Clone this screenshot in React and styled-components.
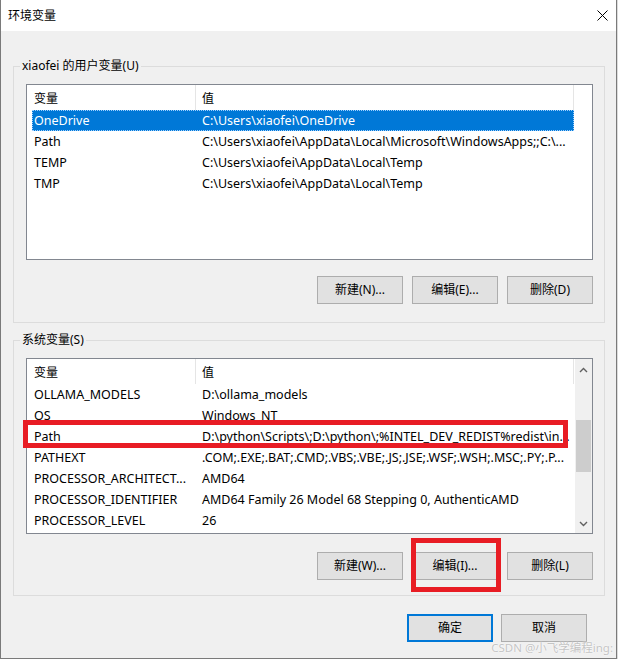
import React from 'react';
import styled, { createGlobalStyle } from 'styled-components';

const GlobalStyle = createGlobalStyle`
  html, body { margin: 0; padding: 0; background: #dcdcdc; }
  body {
    font-family: "Noto Sans", "Noto Sans CJK SC", sans-serif;
    font-size: 12px;
    color: #000;
  }
  * { box-sizing: border-box; }
`;

const Window = styled.div`
  position: relative;
  width: 617px;
  height: 659px;
  background: #f0f0f0;
  border: 1px solid #7a7a7a;
  border-top: none;
  display: flex;
  flex-direction: column;
`;

const TitleBar = styled.div`
  height: 31px;
  flex: none;
  background: #fff;
  display: flex;
  align-items: center;
  justify-content: space-between;
  padding: 0 8px 0 7px;
`;

const Title = styled.span`
  font-size: 12px;
  line-height: 16px;
`;

const Content = styled.div`
  flex: 1;
  display: flex;
  flex-direction: column;
  padding: 27px 11px 0 12px;
`;

const Group = styled.fieldset`
  margin: 0;
  padding: 10px 11px ${p => p.$padBottom}px 12px;
  border: 1px solid #dcdcdc;
  min-width: 0;
  & + & { margin-top: 9px; }
`;

const Legend = styled.legend`
  padding: 0 2px;
  margin-left: -6px;
  line-height: 16px;
  font-size: 12px;
`;

const ListView = styled.div`
  position: relative;
  height: 176px;
  background: #fff;
  border: 1px solid #828790;
  display: flex;
`;

const ListBody = styled.div`
  flex: 1;
  min-width: 0;
  display: flex;
  flex-direction: column;
`;

const Header = styled.div`
  display: flex;
  height: 25px;
  flex: none;
`;

const HeaderCell = styled.div`
  width: ${p => p.$w}px;
  padding-left: ${p => p.$pad}px;
  border-right: 1px solid #e5e5e5;
  display: flex;
  align-items: center;
  white-space: nowrap;
`;

const Row = styled.div`
  position: relative;
  display: grid;
  grid-template-columns: 163px 379px;
  width: 542px;
  height: 21px;
  margin-left: 5px;
  align-items: center;
  background: ${p => (p.$selected ? '#0078d7' : 'transparent')};
  color: ${p => (p.$selected ? '#fff' : '#000')};
  outline: ${p => (p.$selected ? '1px dotted #9fd0ff' : 'none')};
  outline-offset: -1px;
`;

const Cell = styled.div`
  padding-left: ${p => p.$pad}px;
  white-space: nowrap;
  overflow: hidden;
  font-size: 12.5px;
  line-height: 16px;
`;

const ScrollBar = styled.div`
  width: 17px;
  flex: none;
  background: #f0f0f0;
  display: flex;
  flex-direction: column;
`;

const ArrowBtn = styled.div`
  height: ${p => p.$h}px;
  display: flex;
  align-items: ${p => (p.$down ? 'flex-start' : 'flex-end')};
  justify-content: center;
  padding: ${p => (p.$down ? '5px 0 0' : '0 0 6px')};
`;

const Track = styled.div`
  flex: 1;
  display: flex;
  flex-direction: column;
  align-items: center;
`;

const Thumb = styled.div`
  margin-top: ${p => p.$top}px;
  width: 15px;
  height: 52px;
  background: #cdcdcd;
`;

const ButtonRow = styled.div`
  display: flex;
  justify-content: flex-end;
  gap: ${p => p.$gap || 9}px;
  margin-top: ${p => p.$mt}px;
  padding-right: ${p => p.$pr || 0}px;
`;

const Button = styled.button`
  position: relative;
  width: 86px;
  height: 28px;
  padding: 0;
  margin: 0;
  background: #e1e1e1;
  border: ${p => (p.$default ? '2px solid #0078d7' : '1px solid #adadad')};
  font-family: inherit;
  font-size: 12px;
  color: #000;
  line-height: 16px;
`;

const RedMark = styled.div`
  position: absolute;
  left: ${p => p.$l}px;
  top: ${p => p.$t}px;
  width: ${p => p.$w}px;
  height: ${p => p.$h}px;
  border: 5px solid #e81c24;
  pointer-events: none;
  z-index: 2;
`;

const Watermark = styled.div`
  position: absolute;
  right: 3px;
  bottom: 2px;
  font-size: 11.5px;
  line-height: 16px;
  color: #c4c4c4;
  text-shadow: 0 0 1px #fff, 0 0 2px #fff;
  white-space: nowrap;
`;

const CloseIcon = () => (
  <svg width="11" height="11" viewBox="0 0 11 11">
    <path d="M0.5 0.5 L10.5 10.5 M10.5 0.5 L0.5 10.5" stroke="#000" strokeWidth="1" fill="none" />
  </svg>
);

const Chevron = ({ down }) => (
  <svg width="9" height="6" viewBox="0 0 9 6">
    <path
      d={down ? 'M1 1 L4.5 4.5 L8 1' : 'M1 5 L4.5 1.5 L8 5'}
      stroke="#606060"
      strokeWidth="1.4"
      fill="none"
    />
  </svg>
);

const userVars = [
  ['OneDrive', 'C:\\Users\\xiaofei\\OneDrive', true],
  ['Path', 'C:\\Users\\xiaofei\\AppData\\Local\\Microsoft\\WindowsApps;;C:\\...'],
  ['TEMP', 'C:\\Users\\xiaofei\\AppData\\Local\\Temp'],
  ['TMP', 'C:\\Users\\xiaofei\\AppData\\Local\\Temp'],
];

const sysVars = [
  ['OLLAMA_MODELS', 'D:\\ollama_models'],
  ['OS', 'Windows_NT'],
  ['Path', 'D:\\python\\Scripts\\;D:\\python\\;%INTEL_DEV_REDIST%redist\\in...', false, true],
  ['PATHEXT', '.COM;.EXE;.BAT;.CMD;.VBS;.VBE;.JS;.JSE;.WSF;.WSH;.MSC;.PY;.P...'],
  ['PROCESSOR_ARCHITECT...', 'AMD64'],
  ['PROCESSOR_IDENTIFIER', 'AMD64 Family 26 Model 68 Stepping 0, AuthenticAMD'],
  ['PROCESSOR_LEVEL', '26'],
];

const VarList = ({ items, scroll }) => (
  <ListView>
    <ListBody>
      <Header>
        <HeaderCell $w={169} $pad={7}>变量</HeaderCell>
        <HeaderCell $w={378} $pad={6}>值</HeaderCell>
      </Header>
      {items.map(([name, value, selected, marked]) => (
        <Row key={name} $selected={selected}>
          <Cell $pad={2}>{name}</Cell>
          <Cell $pad={7}>{value}</Cell>
          {marked && <RedMark $l={-9} $t={-6} $w={545} $h={28} />}
        </Row>
      ))}
    </ListBody>
    {scroll && (
      <ScrollBar>
        <ArrowBtn $h={20}><Chevron /></ArrowBtn>
        <Track>
          <Thumb $top={41} />
        </Track>
        <ArrowBtn $h={17} $down><Chevron down /></ArrowBtn>
      </ScrollBar>
    )}
  </ListView>
);

export default function App() {
  return (
    <>
      <GlobalStyle />
      <Window>
        <TitleBar>
          <Title>环境变量</Title>
          <CloseIcon />
        </TitleBar>
        <Content>
          <Group $padBottom={18}>
            <Legend>xiaofei 的用户变量(U)</Legend>
            <VarList items={userVars} />
            <ButtonRow $mt={16}>
              <Button>新建(N)...</Button>
              <Button>编辑(E)...</Button>
              <Button>删除(D)</Button>
            </ButtonRow>
          </Group>
          <Group $padBottom={15}>
            <Legend>系统变量(S)</Legend>
            <VarList items={sysVars} scroll />
            <ButtonRow $mt={18}>
              <Button>新建(W)...</Button>
              <Button>
                编辑(I)...
                <RedMark $l={-2} $t={-15} $w={90} $h={54} />
              </Button>
              <Button>删除(L)</Button>
            </ButtonRow>
          </Group>
          <ButtonRow $mt={18} $gap={8} $pr={18}>
            <Button $default>确定</Button>
            <Button>取消</Button>
          </ButtonRow>
        </Content>
        <Watermark>CSDN @小飞学编程ing:</Watermark>
      </Window>
    </>
  );
}
